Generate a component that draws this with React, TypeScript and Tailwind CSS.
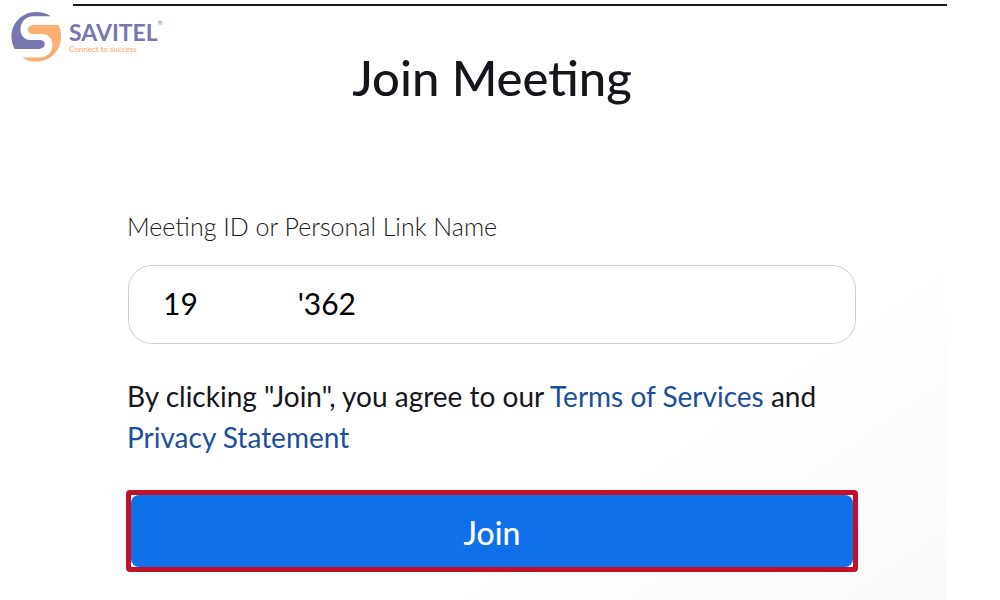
import { type FormEvent, useState } from "react";

const Logo = () => (
  <div className="absolute left-[11px] top-3 flex items-center gap-2">
    <svg width="50" height="50" viewBox="0 0 50 50" aria-hidden="true">
      <path
        d="M40 4.300C35 1.200 30 0 25 0C11 0 .5 11 .5 24.500C.5 29 1.500 33 3.700 37H27C31.500 37 33.800 34.500 33.800 32C33.800 29.500 31.500 28 28 28H19C13.500 28 9.500 23.500 9.500 17.500C9.500 10 14.500 4.300 22.500 4.300Z"
        fill="#7876b1"
      />
      <path
        d="M47.500 13H24C19.500 13 17 15 17 17.500C17 20.500 19 22 22.500 22H31C37 22 41.500 26.500 41.500 32.500C41.500 40 36.500 45.500 29 45.500H11C15.500 48.500 20 49.700 25 49.700C39 49.700 50 39 50 25C50 20.500 49.300 16.500 47.500 13Z"
        fill="#fbb072"
      />
    </svg>
    <div className="flex flex-col">
      <div className="flex text-[#7876b1]">
        <span className="text-[23px] leading-6 font-bold">SAVITEL</span>
        <span className="text-[6px] leading-none">®</span>
      </div>
      <span className="text-[8px] leading-[10px] text-[#fba56b]">Connect to success</span>
    </div>
  </div>
);

const App = () => {
  const [meetingId, setMeetingId] = useState("19\u00a0\u00a0\u00a0\u00a0\u00a0\u00a0\u00a0\u00a0\u00a0\u00a0\u00a0\u00a0\u00a0'362");

  const handleSubmit = (e: FormEvent<HTMLFormElement>) => {
    e.preventDefault();
  };

  return (
    <main className="relative min-h-screen bg-white pt-1 pr-[53px] pl-[73px] font-['Lato',sans-serif] text-[#15161c]">
      {/* Meeting card */}
      <section className="min-h-[596px] border-t-2 border-[#1b1b1d] bg-linear-to-br from-white from-70% to-[#f9f9fa] pr-[89px] pl-[53px]">
        <h1 className="pt-[43px] text-center text-[49px] leading-[56px] font-medium">Join Meeting</h1>

        <form onSubmit={handleSubmit} className="flex flex-col pt-[105px]">
          <label htmlFor="meeting-id" className="px-px text-[25px] leading-8 font-light text-[#1c1c20]">
            Meeting ID or Personal Link Name
          </label>
          <div className="mt-[23px] flex px-0.5">
            <input
              id="meeting-id"
              type="text"
              value={meetingId}
              onChange={(e) => setMeetingId(e.target.value)}
              className="h-[79px] w-full rounded-3xl border border-[#cfcfd1] bg-white px-[34px] pb-1 text-[30px] text-black outline-none"
            />
          </div>

          <p className="mt-8 px-px text-[28px] leading-[41px]">
            By clicking "Join", you agree to our{" "}
            <a href="#terms" className="text-[#1b4f9c]">
              Terms of Services
            </a>{" "}
            and{" "}
            <a href="#privacy" className="text-[#1b4f9c]">
              Privacy Statement
            </a>
          </p>

          {/* Highlighted submit */}
          <div className="mt-8 rounded-sm border-[5px] border-[#c3102a] bg-white">
            <button
              type="submit"
              className="block h-[72px] w-full rounded-lg bg-[#1070ea] pt-1 text-[32px] font-medium text-white"
            >
              Join
            </button>
          </div>
        </form>
      </section>

      <Logo />
    </main>
  );
};

export default App;
